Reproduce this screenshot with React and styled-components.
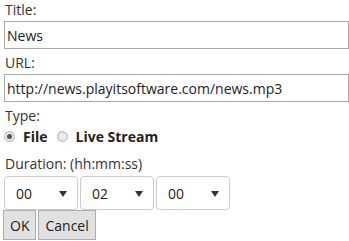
import React from "react";
import styled, { createGlobalStyle } from "styled-components";

const GlobalStyle = createGlobalStyle`
  body {
    margin: 0;
    background: #ffffff;
    font-family: "Open Sans", "Liberation Sans", sans-serif;
    font-size: 14px;
    color: #333333;
  }
`;

const Form = styled.div`
  padding: 0 0 0 4px;
  display: flex;
  flex-direction: column;
`;

const Label = styled.div`
  line-height: 20px;
  height: 20px;
  margin-top: ${(p) => p.$top || 0}px;
  padding-left: 1px;
`;

const TextInput = styled.input`
  box-sizing: border-box;
  width: 345px;
  height: 28px;
  margin: 1px 0 0;
  padding: 0 2px;
  border: 1px solid #a9a9a9;
  border-radius: 0;
  font-family: inherit;
  font-size: 14px;
  color: #222222;
  outline: none;
`;

const RadioRow = styled.div`
  display: flex;
  align-items: center;
  height: 20px;
`;

const RadioLabel = styled.label`
  display: flex;
  align-items: center;
  margin-right: 9px;
  font-weight: 700;
  color: #2a1c1c;
`;

const Radio = styled.input`
  appearance: none;
  box-sizing: border-box;
  width: 11px;
  height: 11px;
  margin: 1px 8px 0 0;
  border: 1px solid #b4b4b4;
  border-radius: 50%;
  background: radial-gradient(circle, #f4f4f4 0%, #dcdcdc 100%);
  position: relative;

  &:checked::after {
    content: "";
    position: absolute;
    left: 2px;
    top: 2px;
    width: 5px;
    height: 5px;
    border-radius: 50%;
    background: #555555;
  }
`;

const SelectRow = styled.div`
  display: flex;
  gap: 2px;
  margin-top: 2px;
`;

const SelectBox = styled.div`
  box-sizing: border-box;
  width: 74px;
  height: 34px;
  border: 1px solid #cccccc;
  border-radius: 4px;
  background: #ffffff;
  display: flex;
  align-items: center;
  justify-content: space-between;
  padding: 0 10px 0 11px;
  color: #222222;
`;

const Arrow = styled.span`
  width: 0;
  height: 0;
  border-left: 4px solid transparent;
  border-right: 4px solid transparent;
  border-top: 6px solid #333333;
  margin-top: 1px;
`;

const ButtonRow = styled.div`
  display: flex;
  gap: 2px;
  margin-left: -1px;
`;

const Button = styled.button`
  box-sizing: border-box;
  height: 30px;
  padding: 0 6px;
  border: 1px solid #adadad;
  border-radius: 0;
  background: #e1e1e1;
  font-family: inherit;
  font-size: 14px;
  color: #222222;
`;

function Select({ value }) {
  return (
    <SelectBox>
      <span>{value}</span>
      <Arrow />
    </SelectBox>
  );
}

export default function App() {
  return (
    <>
      <GlobalStyle />
      <Form>
        <Label>Title:</Label>
        <TextInput defaultValue="News" />
        <Label $top={4}>URL:</Label>
        <TextInput defaultValue="http://news.playitsoftware.com/news.mp3" />
        <Label $top={4}>Type:</Label>
        <RadioRow>
          <RadioLabel>
            <Radio type="radio" name="type" defaultChecked />
            File
          </RadioLabel>
          <RadioLabel>
            <Radio type="radio" name="type" />
            Live Stream
          </RadioLabel>
        </RadioRow>
        <Label $top={8}>Duration: (hh:mm:ss)</Label>
        <SelectRow>
          <Select value="00" />
          <Select value="02" />
          <Select value="00" />
        </SelectRow>
        <ButtonRow>
          <Button>OK</Button>
          <Button>Cancel</Button>
        </ButtonRow>
      </Form>
    </>
  );
}
